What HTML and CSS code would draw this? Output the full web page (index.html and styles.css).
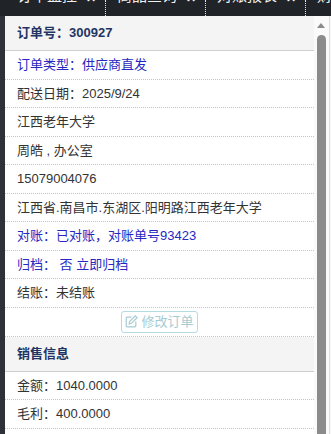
FILE: index.html
```html
<!DOCTYPE html>
<html lang="zh-CN">
<head>
  <meta charset="UTF-8" />
  <meta name="viewport" content="width=device-width, initial-scale=1" />
  <title>订单详情</title>
  <link rel="stylesheet" href="styles.css">
</head>
<body>

<div class="tabs">
  <div class="tab"><span class="tab-text">订单监控</span><span class="tab-x">✕</span></div>
  <div class="tab"><span class="tab-text">商品查询</span><span class="tab-x">✕</span></div>
  <div class="tab"><span class="tab-text">对账报表</span><span class="tab-x">✕</span></div>
  <div class="tab"><span class="tab-text">财务</span></div>
</div>

<div class="main">
  <div class="side"></div>

  <div class="panel">
    <div class="hd">订单号：300927</div>
    <div class="row blue">订单类型：供应商直发</div>
    <div class="row">配送日期：2025/9/24</div>
    <div class="row">江西老年大学</div>
    <div class="row">周皓 , 办公室</div>
    <div class="row">15079004076</div>
    <div class="row">江西省.南昌市.东湖区.阳明路江西老年大学</div>
    <div class="row blue">对账：已对账，对账单号93423</div>
    <div class="row blue">归档：&nbsp;否 立即归档</div>
    <div class="row">结账：未结账</div>
    <div class="row btn-row">
      <span class="btn">
        <svg width="13" height="13" viewBox="0 0 13 13" fill="none" stroke="currentColor" stroke-width="1.2">
          <path d="M6.5 2.2H2.2a1 1 0 0 0-1 1v7.6a1 1 0 0 0 1 1h7.6a1 1 0 0 0 1-1V6.5"/>
          <path d="M10.3 0.9l1.8 1.8-5.6 5.6-2.4 0.6 0.6-2.4z"/>
        </svg>
        修改订单
      </span>
    </div>
    <div class="hd">销售信息</div>
    <div class="row">金额：1040.0000</div>
    <div class="row">毛利：400.0000</div>
  </div>

  <div class="scroll">
    <div class="arrow"></div>
    <div class="thumb"></div>
  </div>
</div>

</body>
</html>
```

FILE: styles.css
```css
body {
  margin: 0;
  height: 434px;
  overflow: hidden;
  background-color: #2c3035;
  font-family: "Liberation Sans", "Noto Sans CJK SC", sans-serif;
  font-size: 13px;
  color: #333;
}
.tabs {
  display: flex;
  height: 16px;
  padding-left: 6px;
  background-color: #202428;
  overflow: hidden;
}
.tab {
  flex: 0 0 100px;
  display: flex;
  gap: 9px;
  box-sizing: border-box;
  padding-left: 11px;
  border-right: 1px dotted #e8e8e8;
  color: #f0f0f0;
  font-size: 15px;
  line-height: 15px;
}
.tab-text {
  margin-top: -12px;
}
.tab-x {
  font-size: 12px;
  font-weight: bold;
  margin-top: -9px;
}
.main {
  display: flex;
  height: 418px;
}
.side {
  width: 5px;
  background-color: #2e3237;
}
.panel {
  width: 309px;
  background-color: #fff;
  overflow: hidden;
}
.hd {
  height: 35px;
  box-sizing: border-box;
  padding-left: 12px;
  line-height: 34px;
  background-color: #f4f4f4;
  border-bottom: 1px solid #cfcfcf;
  font-weight: bold;
  color: #1f3463;
}
.row {
  height: 28.5px;
  box-sizing: border-box;
  padding-left: 12px;
  line-height: 27.5px;
  border-bottom: 1px dotted #c4c4c4;
}
.blue {
  color: #2727c2;
}
.btn-row {
  height: 29px;
  display: flex;
  align-items: center;
  justify-content: center;
  padding-left: 0;
}
.btn {
  display: inline-flex;
  align-items: center;
  gap: 3px;
  height: 22px;
  box-sizing: border-box;
  padding: 0 3px;
  border: 1px solid #b4dbe2;
  border-radius: 3px;
  color: #a6cbd3;
  line-height: 20px;
}
.scroll {
  width: 17px;
  display: flex;
  flex-direction: column;
  padding-left: 3px;
  box-sizing: border-box;
  background: linear-gradient(to right, #fafafa 15px, #dcdcdc 15px, #dcdcdc 16px, #fafafa 16px);
}
.arrow {
  width: 0;
  height: 0;
  margin-top: 7px;
  border-left: 4px solid transparent;
  border-right: 4px solid transparent;
  border-bottom: 5px solid #8a8a8a;
}
.thumb {
  flex: 1;
  width: 9px;
  margin-top: 7px;
  border-radius: 5px 5px 0 0;
  background-color: #8b8b8b;
}
```
